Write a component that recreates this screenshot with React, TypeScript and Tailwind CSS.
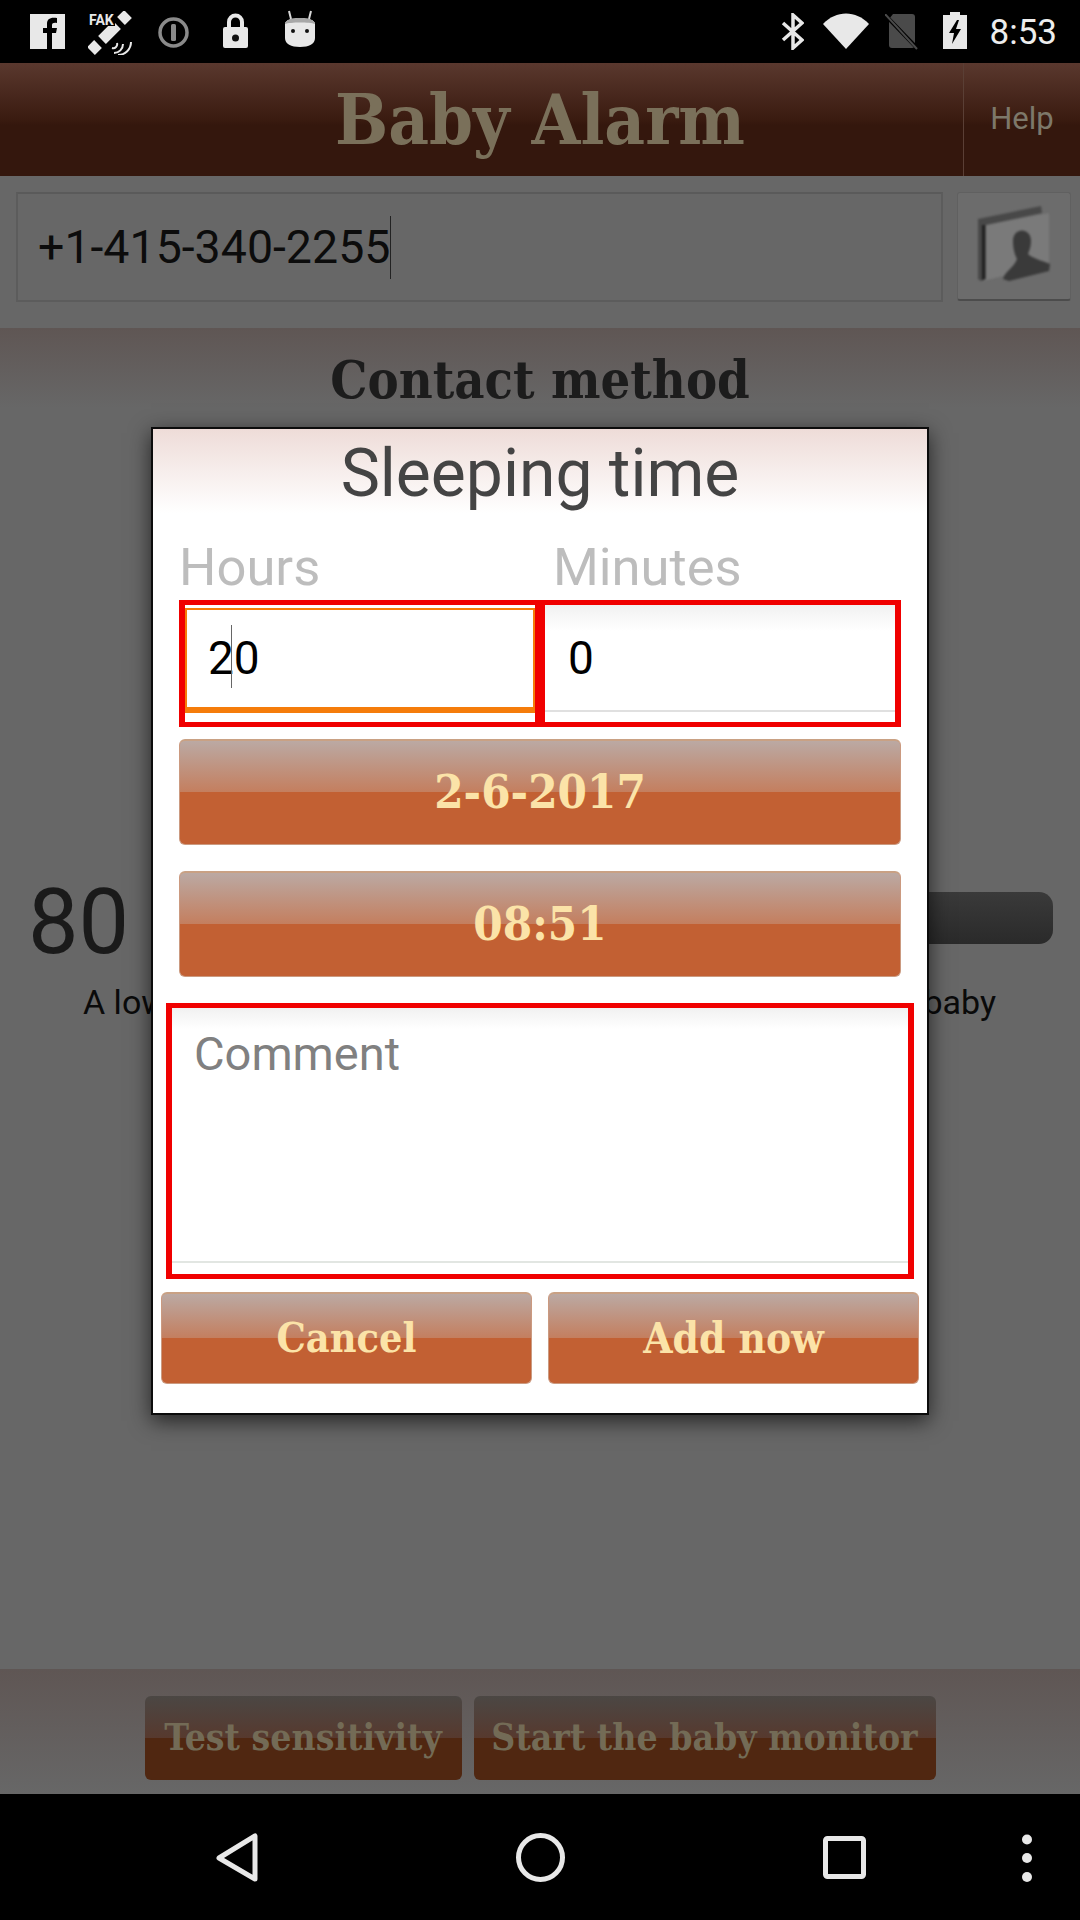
const SERIF = "font-['DejaVu_Serif_Condensed','DejaVu_Serif',serif] font-bold"

function GlossButton({ label, className }: { label: string; className: string }) {
  return (
    <div
      className={`flex items-center justify-center rounded-[6px] border border-[#cb9a80] border-t-2 border-t-[#c9a184] bg-[linear-gradient(#bba9a3_0%,#c47e5e_50%,#c26033_50%,#c26033_100%)] text-[#fbe3a8] ${SERIF} ${className}`}
    >
      {label}
    </div>
  )
}

function DimButton({ label, className }: { label: string; className: string }) {
  return (
    <div
      className={`flex items-center justify-center rounded-[6px] bg-[linear-gradient(#4b4744_0%,#57392e_50%,#502711_50%,#502711_100%)] text-[37px] text-[#736b56] ${SERIF} ${className}`}
    >
      {label}
    </div>
  )
}

function StatusBar() {
  return (
    <div className="flex h-[63px] shrink-0 items-start bg-black pl-[30px] text-[#e8e8e8]">
      {/* Facebook */}
      <svg className="mt-[14px]" width="35" height="35" viewBox="0 0 35 35">
        <rect width="35" height="35" fill="#e8e8e8" />
        <path d="M17 35V19h-4v-5h4v-4c0-5 3-7 10-6v5c-3-.5-5 0-5 2v3h5l-1 5h-4v16z" fill="#000" />
      </svg>
      {/* Fake GPS */}
      <svg className="ml-[23px] mt-[11px]" width="46" height="44" viewBox="0 0 46 44">
        <path d="M3 40l7-7M14 29l15-15M33 10l7-7" fill="none" stroke="#e8e8e8" strokeWidth="11" />
        <rect x="0" y="0" width="27" height="15" fill="#000" />
        <text x="1" y="14" fontSize="14" fontWeight="700" fill="#e8e8e8" fontFamily="Roboto">FAK</text>
        <path d="M26 42a9 9 0 0 0 9-9M30 44a13 13 0 0 0 13-13M24 37a4 4 0 0 0 5-5" fill="none" stroke="#e8e8e8" strokeWidth="2" />
      </svg>
      {/* Ring with 1 */}
      <svg className="ml-[24px] mt-[17px]" width="31" height="31" viewBox="0 0 31 31">
        <circle cx="15.5" cy="15.5" r="13.5" fill="none" stroke="#8a8a8a" strokeWidth="3.5" />
        <rect x="13" y="7" width="5" height="17" rx="1.5" fill="#8a8a8a" />
      </svg>
      {/* Lock */}
      <svg className="ml-[34px] mt-[13px]" width="25" height="35" viewBox="0 0 25 35">
        <path d="M6 15V9a6.500 6.500 0 0 1 13 0v6" fill="none" stroke="#e8e8e8" strokeWidth="4" />
        <rect y="14" width="25" height="21" rx="2" fill="#e8e8e8" />
        <circle cx="12.500" cy="25" r="3.500" fill="#111" />
      </svg>
      {/* Marshmallow droid */}
      <svg className="ml-[36px] mt-[10px]" width="32" height="37" viewBox="0 0 32 37">
        <path d="M7 9L5 1M25 9l2-8" stroke="#d8d8d8" strokeWidth="2" />
        <path d="M1 14c0-4 7-6 15-6s15 2 15 6v14c0 6-6 9-15 9S1 34 1 28z" fill="#e8e8e8" />
        <path d="M1 14c0-4 7-6 15-6s15 2 15 6c-5-2-25-2-30 0z" fill="#a8a8a8" />
        <circle cx="9" cy="21" r="2" fill="#111" />
        <circle cx="23" cy="21" r="2" fill="#111" />
      </svg>

      <div className="ml-auto flex items-start pr-[23px]">
        {/* Bluetooth */}
        <svg className="mt-[13px]" width="23" height="37" viewBox="0 0 23 37">
          <path d="M2 10l19 17-9 8V2l9 8L2 27" fill="none" stroke="#e8e8e8" strokeWidth="3.500" />
        </svg>
        {/* Wifi */}
        <svg className="ml-[19px] mt-[13px]" width="46" height="36" viewBox="0 0 46 36">
          <path d="M0 11C13-3 33-3 46 11L23 36z" fill="#e8e8e8" />
        </svg>
        {/* No SIM */}
        <svg className="ml-[16px] mt-[14px]" width="33" height="36" viewBox="0 0 33 36">
          <path d="M4 5V31a3 3 0 0 0 3 3H27a3 3 0 0 0 3-3V3a3 3 0 0 0-3-3H8z" fill="#4a4a4a" />
          <path d="M0 1L33 35" stroke="#000" strokeWidth="4" />
          <path d="M0 0L32 35" stroke="#4a4a4a" strokeWidth="2" />
        </svg>
        {/* Battery charging */}
        <svg className="ml-[25px] mt-[12px]" width="24" height="37" viewBox="0 0 24 37">
          <path d="M7 0h10v3h7v34H0V3h7z" fill="#e8e8e8" />
          <path d="M14 8L6 21h5l-2 11 9-15h-5l3-9z" fill="#000" />
        </svg>
        <span className="ml-[23px] mt-[13px] font-[Roboto] text-[35px] leading-[40px] text-[#ededed]">8:53</span>
      </div>
    </div>
  )
}

function ContactBookIcon() {
  return (
    <svg className="blur-[1px]" width="112" height="108" viewBox="17 23 112 108">
      <path d="M45 56l63-12v52l-66 16z" fill="#7a7a7a" />
      <path d="M37 50l63-13 1 7-56 12v54l-5 2-3-2z" fill="#484848" />
      <path d="M41 56h3v54l-3 1z" fill="#202020" />
      <path d="M72 72c0-14 18-14 18 0 0 6-2 10-3 13 4 4 12 6 22 10l-1 7-40 10-6-2c2-8 10-10 14-20-2-4-4-10-4-18z" fill="#3a3a3a" />
    </svg>
  )
}

function Background() {
  return (
    <div className="flex min-h-0 flex-1 flex-col bg-[#676767] font-[Roboto]">
      {/* App header */}
      <div className="flex h-[113px] shrink-0 bg-[linear-gradient(#5a382e_0%,#3a1b10_50%,#34170d_55%,#34170d_100%)]">
        <div className={`flex flex-1 items-center justify-center pl-[117px] text-[70px] text-[#7a705a] ${SERIF}`}>
          Baby Alarm
        </div>
        <div className="flex w-[117px] items-center justify-center border-l border-l-[#5a3f35] text-[31px] text-[#7d786a]">
          Help
        </div>
      </div>

      {/* Phone number */}
      <div className="flex h-[152px] shrink-0 gap-[14px] pl-[16px] pr-[9px] pt-[16px]">
        <div className="flex h-[110px] flex-1 items-center border-2 border-[#5c5c5c] border-t-[#5a5a5a] pl-[20px] text-[46.500px] text-[#0c0c0c]">
          <span className="border-r border-r-[#222] py-[8px] leading-[47px]">+1-415-340-2255</span>
        </div>
        <div className="flex h-[109px] w-[114px] items-center justify-center rounded-[3px] border border-[#606060] border-b-2 border-b-[#4c4c4c] bg-[#6c6c6c]">
          <ContactBookIcon />
        </div>
      </div>

      {/* Contact method */}
      <div className="h-[80px] shrink-0 bg-[linear-gradient(#5f5654,#676767)]">
        <div className={`pt-[25px] text-center text-[52px] leading-[54px] text-[#1c1c1c] ${SERIF}`}>Contact method</div>
      </div>

      {/* Sensitivity */}
      <div className="flex flex-1 flex-col pt-[470px]">
        <div className="flex items-center pl-[28px] pr-[27px]">
          <span className="text-[90px] leading-[90px] text-[#1a1a1a]">80</span>
          <div className="-mt-[10px] ml-[30px] h-[52px] flex-1 rounded-[14px] bg-[linear-gradient(#3a3a3a,#2a2a2a)]" />
        </div>
        <div className="mt-[14px] flex justify-between pl-[83px] pr-[84px] text-[34px] leading-[40px] text-[#0a0a0a]">
          <span>A low</span>
          <span>the baby</span>
        </div>
      </div>

      {/* Bottom actions */}
      <div className="flex h-[125px] shrink-0 justify-center gap-[12px] bg-[linear-gradient(#5f5654,#676767)] pt-[27px]">
        <DimButton label="Test sensitivity" className="h-[84px] w-[317px]" />
        <DimButton label="Start the baby monitor" className="h-[84px] w-[462px]" />
      </div>
    </div>
  )
}

function NavBar() {
  return (
    <div className="flex h-[126px] shrink-0 items-start bg-black pl-[216px] pt-[39px]">
      <svg width="42" height="49" viewBox="0 0 42 49">
        <path d="M39 3V46L3 25z" fill="none" stroke="#e8e8e8" strokeWidth="5" strokeLinejoin="round" />
      </svg>
      <svg className="ml-[258px]" width="49" height="49" viewBox="0 0 49 49">
        <circle cx="24.500" cy="24.500" r="22" fill="none" stroke="#e8e8e8" strokeWidth="5" />
      </svg>
      <svg className="ml-[258px] mt-[3px]" width="43" height="43" viewBox="0 0 43 43">
        <rect x="2.500" y="2.500" width="38" height="38" rx="2" fill="none" stroke="#e8e8e8" strokeWidth="5" />
      </svg>
      <svg className="ml-[155px] mt-[1px]" width="12" height="48" viewBox="0 0 12 48">
        <circle cx="6" cy="5.500" r="5" fill="#e8e8e8" />
        <circle cx="6" cy="24" r="5" fill="#e8e8e8" />
        <circle cx="6" cy="43" r="5" fill="#e8e8e8" />
      </svg>
    </div>
  )
}

function SleepDialog() {
  return (
    <div className="absolute left-[151px] top-[427px] flex h-[988px] w-[778px] flex-col border-2 border-[#0c0c0c] bg-white font-[Roboto] shadow-[0_6px_20px_rgba(0,0,0,0.65)]">
      <div className="flex h-[84px] shrink-0 items-center justify-center bg-[linear-gradient(#eedcd8,#ffffff)] pt-[6px] text-[66px] leading-[76px] text-[#444]">
        Sleeping time
      </div>

      <div className="flex h-[87px] shrink-0 items-start pt-[25px] text-[52.500px] leading-[58px] text-[#bdbdbd]">
        <span className="ml-[26px] w-[374px]">Hours</span>
        <span>Minutes</span>
      </div>

      {/* Hours + minutes */}
      <div className="ml-[26px] flex h-[127px] w-[722px] shrink-0">
        <div className="h-full w-[361px] border-y-[5px] border-l-[6px] border-r-[5px] border-[#f00000] bg-white pt-[3px]">
          <div className="relative h-[105px] border-x-2 border-t-2 border-b-[6px] border-[#f57c0a] pl-[21px] pt-[21px] text-[46px] leading-[54px] text-black">
            20
            <span className="absolute left-[44px] top-[15px] h-[63px] w-px bg-[#666]" />
          </div>
        </div>
        <div className="h-full flex-1 border-y-[5px] border-l-[5px] border-r-[6px] border-[#f00000] bg-[linear-gradient(#f1f1f1,#ffffff_22%)]">
          <div className="h-[107px] border-b-2 border-b-[#e0e0e0] pl-[23px] pt-[26px] text-[46px] leading-[54px] text-black">0</div>
        </div>
      </div>

      <GlossButton label="2-6-2017" className="ml-[26px] mt-[12px] h-[106px] w-[722px] shrink-0 text-[47px]" />
      <GlossButton label="08:51" className="ml-[26px] mt-[26px] h-[106px] w-[722px] shrink-0 text-[47px]" />

      {/* Comment */}
      <div className="ml-[13px] mt-[26px] h-[276px] w-[748px] shrink-0 border-x-[6px] border-y-[5px] border-[#f00000] bg-[linear-gradient(#f1f1f1,#ffffff_8%)]">
        <div className="h-[255px] border-b-2 border-b-[#e2e6e2] pl-[22px] pt-[19px] text-[47px] leading-[54px] text-[#808080]">Comment</div>
      </div>

      {/* Actions */}
      <div className="ml-[8px] mt-[13px] flex gap-[16px]">
        <GlossButton label="Cancel" className="h-[92px] w-[371px] text-[41px]" />
        <GlossButton label="Add now" className="h-[92px] w-[371px] text-[42px]" />
      </div>
    </div>
  )
}

export default function App() {
  return (
    <div className="relative flex h-[1920px] w-[1080px] flex-col overflow-hidden bg-black">
      <StatusBar />
      <Background />
      <NavBar />
      <SleepDialog />
    </div>
  )
}
